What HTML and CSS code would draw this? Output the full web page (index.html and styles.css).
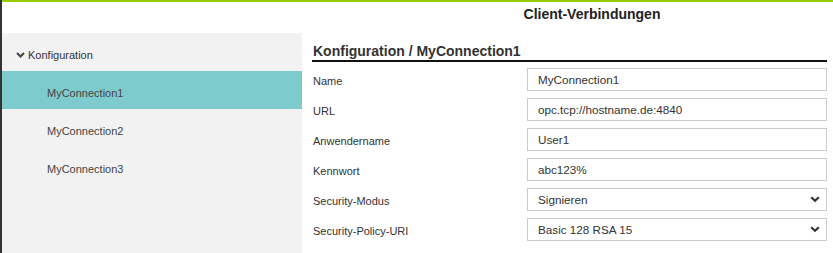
FILE: index.html
```html
<!DOCTYPE html>
<html lang="de">
<head>
    <meta charset="UTF-8">
    <meta name="viewport" content="width=device-width, initial-scale=1.0">
    <title>Client-Verbindungen</title>
    <link rel="stylesheet" href="styles.css">
</head>
<body>
    <div class="app">
        <header class="topbar">
            <h1>Client-Verbindungen</h1>
        </header>

        <div class="layout">
            <nav class="sidebar">
                <div class="tree-head">
                    <svg class="chevron" width="9" height="6" viewBox="0 0 9 6"><path d="M1 1l3.5 3.5L8 1" fill="none" stroke="#444" stroke-width="2"/></svg>
                    Konfiguration
                </div>
                <div class="tree-item active">MyConnection1</div>
                <div class="tree-item">MyConnection2</div>
                <div class="tree-item">MyConnection3</div>
            </nav>

            <main class="content">
                <h2>Konfiguration / MyConnection1</h2>

                <div class="form">
                    <label for="name">Name</label>
                    <input type="text" id="name" value="MyConnection1">

                    <label for="url">URL</label>
                    <input type="text" id="url" value="opc.tcp://hostname.de:4840">

                    <label for="user">Anwendername</label>
                    <input type="text" id="user" value="User1">

                    <label for="pass">Kennwort</label>
                    <input type="text" id="pass" value="abc123%">

                    <label for="mode">Security-Modus</label>
                    <div class="select-wrap">
                        <select id="mode">
                            <option>Signieren</option>
                        </select>
                        <svg class="select-arrow" width="10" height="7" viewBox="0 0 10 7"><path d="M1.2 1.2l3.8 3.6 3.8-3.6" fill="none" stroke="#333" stroke-width="2.2"/></svg>
                    </div>

                    <label for="policy">Security-Policy-URI</label>
                    <div class="select-wrap">
                        <select id="policy">
                            <option>Basic 128 RSA 15</option>
                        </select>
                        <svg class="select-arrow" width="10" height="7" viewBox="0 0 10 7"><path d="M1.2 1.2l3.8 3.6 3.8-3.6" fill="none" stroke="#333" stroke-width="2.2"/></svg>
                    </div>
                </div>
            </main>
        </div>
    </div>
</body>
</html>
```

FILE: styles.css
```css
body {
    margin: 0;
    font-family: 'Liberation Sans', Arial, sans-serif;
    font-size: 11px;
    color: #333;
    background-color: white;
}
.app {
    min-height: 253px;
    border-left: 2px solid #333;
    display: flex;
    flex-direction: column;
}
.topbar {
    border-top: 2px solid #99cc00;
    height: 33px;
    padding-left: 500px;
    box-sizing: border-box;
    padding-top: 4px;
}
h1 {
    margin: 0;
    font-size: 14px;
    font-weight: bold;
    color: #222;
    width: 180px;
    text-align: center;
    line-height: 16px;
}
.layout {
    flex: 1;
    display: flex;
}
.sidebar {
    width: 300px;
    background-color: #f2f2f2;
}
.tree-head {
    height: 38px;
    box-sizing: border-box;
    padding-top: 5px;
    display: flex;
    align-items: center;
    padding-left: 14px;
    gap: 3px;
    color: #333;
}
.tree-item {
    height: 38px;
    box-sizing: border-box;
    padding-top: 5px;
    display: flex;
    align-items: center;
    padding-left: 45px;
    color: #444;
}
.tree-item.active {
    background-color: #7ecbcd;
}
.content {
    flex: 1;
    padding: 10px 6px 0 10px;
}
h2 {
    margin: 0 0 6px;
    font-size: 14px;
    font-weight: bold;
    color: #333;
    padding: 0 0 1px 1px;
    border-bottom: 2px solid #111;
    line-height: 16px;
}
.form {
    display: grid;
    grid-template-columns: 215px 1fr;
    row-gap: 7px;
    align-items: center;
}
label {
    padding-left: 1px;
    padding-top: 2px;
    color: #333;
}
input,
select {
    box-sizing: border-box;
    width: 100%;
    height: 23px;
    border: 1px solid #ccc;
    border-radius: 0;
    background-color: white;
    padding: 0 10px;
    font-family: inherit;
    font-size: 11.7px;
    color: #333;
    outline: none;
}
select {
    -webkit-appearance: none;
    appearance: none;
}
.select-wrap {
    position: relative;
}
.select-arrow {
    position: absolute;
    right: 7px;
    top: 8px;
    pointer-events: none;
}
```
